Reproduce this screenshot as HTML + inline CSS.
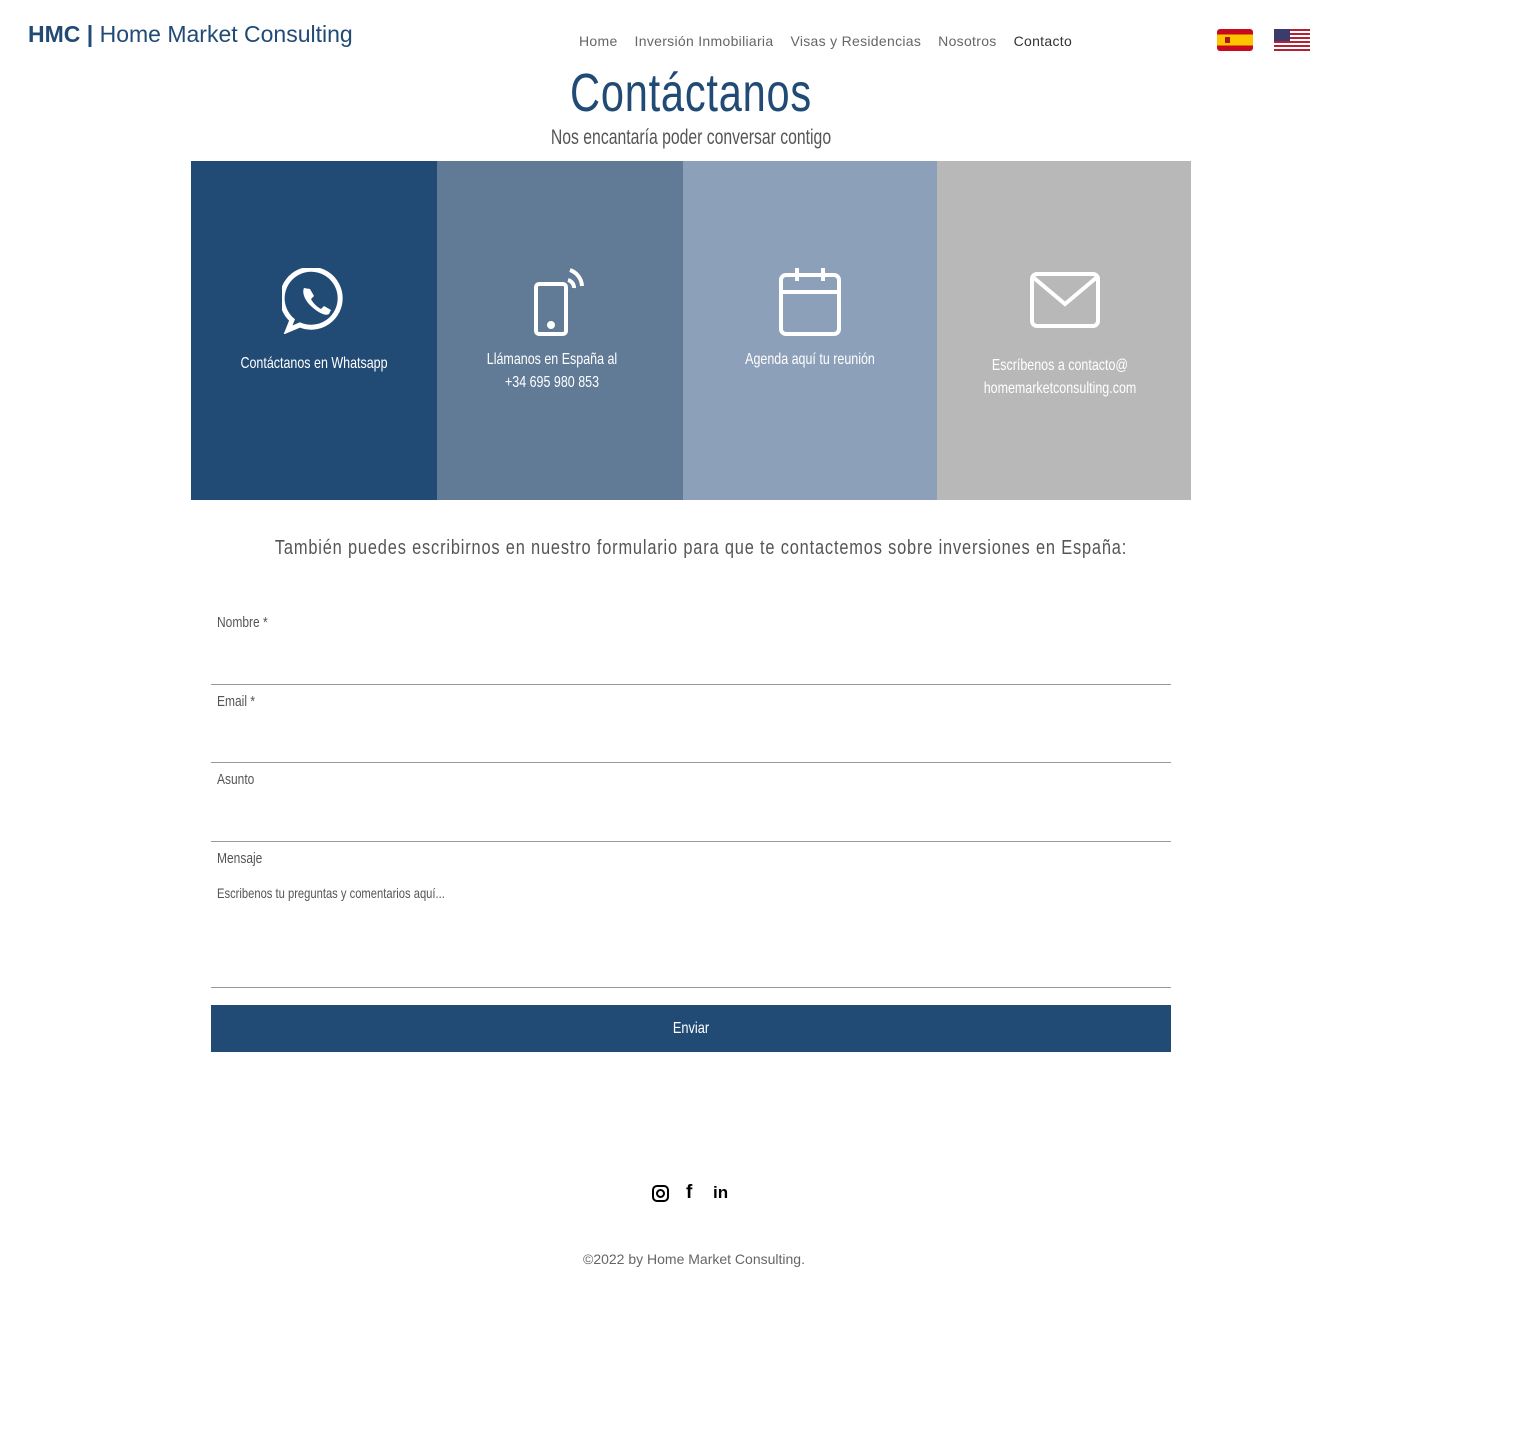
<!DOCTYPE html>
<html><head><meta charset="utf-8"><style>
*{margin:0;padding:0;box-sizing:border-box}
body{width:1536px;height:1450px;background:#fff;position:relative;font-family:"Liberation Sans",sans-serif;overflow:hidden}
.a{position:absolute}
.ctr{text-align:center;white-space:nowrap}
.nav span{margin-right:17px}
.lab{position:absolute;left:217px;font-size:15px;color:#555;transform:scaleX(0.8);transform-origin:left;white-space:nowrap}
.line{position:absolute;left:211px;width:960px;height:1px;background:#999}
.cap{color:#fff;font-size:16px;line-height:23px;transform:scaleX(0.78)}
</style></head><body>
<div class="a" style="left:28px;top:21px;font-size:23px;color:#214a75;white-space:nowrap"><b>HMC |</b> Home Market Consulting</div>
<div class="a nav" style="left:579px;top:33px;font-size:14px;color:#666;white-space:nowrap;letter-spacing:0.3px"><span>Home</span><span>Inversión Inmobiliaria</span><span>Visas y Residencias</span><span>Nosotros</span><span style="color:#333">Contacto</span></div>
<svg class="a" style="left:1217px;top:29px" width="36" height="22"><rect width="36" height="22" rx="3" fill="#c60b1e"/><rect y="5.5" width="36" height="11" fill="#ffc400"/><rect x="8" y="8" width="5" height="6" fill="#ad1519"/></svg>
<svg class="a" style="left:1274px;top:29px" width="36" height="22"><rect width="36" height="22" rx="2" fill="#fff"/><g fill="#b22234"><rect y="0" width="36" height="2"/><rect y="4" width="36" height="2"/><rect y="8" width="36" height="2"/><rect y="12" width="36" height="2"/><rect y="16" width="36" height="2"/><rect y="20" width="36" height="2"/></g><rect width="16" height="12" fill="#3c3b6e"/></svg>
<div class="a ctr" style="left:0;width:1382px;top:62px;font-size:54px;color:#214a75;letter-spacing:1px;transform:scaleX(0.77)">Contáctanos</div>
<div class="a ctr" style="left:0;width:1382px;top:126px;font-size:21px;color:#555;transform:scaleX(0.75)">Nos encantaría poder conversar contigo</div>
<div class="a" style="left:191px;top:161px;width:246px;height:339px;background:#214a75"></div>
<div class="a" style="left:437px;top:161px;width:246px;height:339px;background:#617b97"></div>
<div class="a" style="left:683px;top:161px;width:254px;height:339px;background:#8da0ba"></div>
<div class="a" style="left:937px;top:161px;width:254px;height:339px;background:#b8b8b8"></div>
<svg class="a" style="left:282px;top:268px" width="66" height="66" viewBox="0 0 66 66" fill="none" stroke="#fff" stroke-width="5"><path d="M10 52 L6 62 L18 57 A29 29 0 1 0 10 52Z"/><path d="M22 20c-2 4 0 12 8 19s14 9 17 7l2-4-7-4-3 3c-4-2-8-6-10-10l3-3-4-7z" fill="#fff" stroke="none"/></svg>
<svg class="a" style="left:532px;top:266px" width="52" height="72" fill="none" stroke="#fff" stroke-width="4"><rect x="4" y="18" width="30" height="50" rx="3"/><circle cx="19" cy="59" r="2" fill="#fff"/><path d="M36 14a8 8 0 0 1 6 8M38 4a18 18 0 0 1 12 16"/></svg>
<svg class="a" style="left:777px;top:266px" width="66" height="72" fill="none" stroke="#fff" stroke-width="4"><rect x="4" y="9" width="58" height="59" rx="5"/><path d="M4 26H62M20 2v13M46 2v13"/></svg>
<svg class="a" style="left:1029px;top:270px" width="72" height="60" fill="none" stroke="#fff" stroke-width="4"><rect x="3" y="4" width="66" height="52" rx="5"/><path d="M5 8L36 34 67 8"/></svg>
<div class="a ctr cap" style="left:191px;width:246px;top:352px">Contáctanos en Whatsapp</div>
<div class="a ctr cap" style="left:429px;width:246px;top:348px">Llámanos en España al<br>+34 695 980 853</div>
<div class="a ctr cap" style="left:683px;width:254px;top:348px">Agenda aquí tu reunión</div>
<div class="a ctr cap" style="left:933px;width:254px;top:354px">Escríbenos a contacto@<br>homemarketconsulting.com</div>
<div class="a ctr" style="left:0;width:1402px;top:537px;font-size:20px;color:#555;letter-spacing:1px;transform:scaleX(0.82)">También puedes escribirnos en nuestro formulario para que te contactemos sobre inversiones en España:</div>
<div class="lab" style="top:614px">Nombre *</div><div class="line" style="top:684px"></div>
<div class="lab" style="top:693px">Email *</div><div class="line" style="top:762px"></div>
<div class="lab" style="top:771px">Asunto</div><div class="line" style="top:841px"></div>
<div class="lab" style="top:850px">Mensaje</div>
<div class="lab" style="top:885px;font-size:14px">Escribenos tu preguntas y comentarios aquí...</div>
<div class="line" style="top:987px"></div>
<div class="a" style="left:211px;top:1005px;width:960px;height:47px;background:#214a75"></div>
<div class="a ctr" style="left:211px;top:1005px;width:960px;height:47px;color:#fff;font-size:16px;line-height:47px;transform:scaleX(0.8)">Enviar</div>
<svg class="a" style="left:652px;top:1185px" width="17" height="17" fill="none" stroke="#000" stroke-width="2"><rect x="1" y="1" width="15" height="15" rx="4"/><circle cx="8.5" cy="8.5" r="3.5"/></svg>
<div class="a" style="left:686px;top:1182px;font-size:19px;font-weight:bold">f</div>
<div class="a" style="left:713px;top:1183px;font-size:17px;font-weight:bold">in</div>
<div class="a ctr" style="left:0;width:1388px;top:1251px;font-size:14px;color:#666">©2022 by Home Market Consulting.</div>
</body></html>
